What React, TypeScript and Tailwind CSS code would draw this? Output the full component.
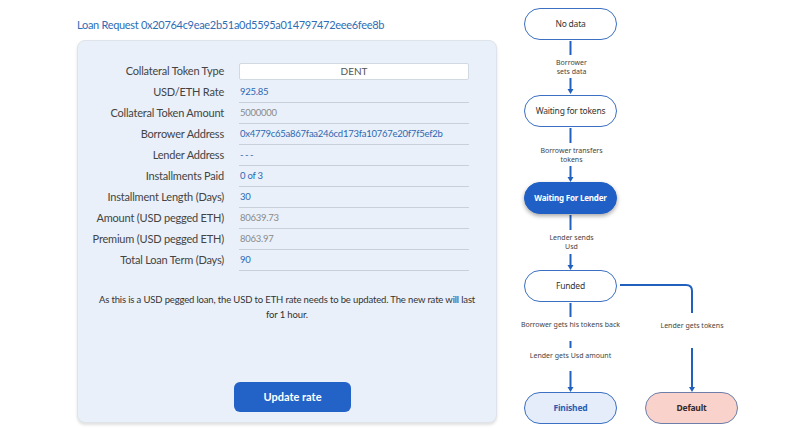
import React from 'react';

const rows: { label: string; value: string; tone: 'blue' | 'gray' }[] = [
  { label: 'USD/ETH Rate', value: '925.85', tone: 'blue' },
  { label: 'Collateral Token Amount', value: '5000000', tone: 'gray' },
  { label: 'Borrower Address', value: '0x4779c65a867faa246cd173fa10767e20f7f5ef2b', tone: 'blue' },
  { label: 'Lender Address', value: '---', tone: 'blue' },
  { label: 'Installments Paid', value: '0 of 3', tone: 'blue' },
  { label: 'Installment Length (Days)', value: '30', tone: 'blue' },
  { label: 'Amount (USD pegged ETH)', value: '80639.73', tone: 'gray' },
  { label: 'Premium (USD pegged ETH)', value: '8063.97', tone: 'gray' },
  { label: 'Total Loan Term (Days)', value: '90', tone: 'blue' },
];

function Node({
  label,
  top,
  left,
  variant = 'plain',
}: {
  label: string;
  top: number;
  left: number;
  variant?: 'plain' | 'active' | 'done' | 'fail';
}) {
  const styles = {
    plain: 'bg-white border-[#3b70c2] text-[#333] font-normal text-[8.5px]',
    active: 'bg-[#1f5fc6] border-[#1f5fc6] text-white font-bold text-[8px] shadow-[0_2px_4px_rgba(0,0,0,0.35)]',
    done: 'bg-[#e4edf9] border-[#3b70c2] text-[#2a5db4] font-bold text-[8.5px]',
    fail: 'bg-[#f9d2cc] border-[#6d7fa8] text-[#3a2a2a] font-bold text-[8.5px]',
  }[variant];
  return (
    <div
      className={`absolute flex h-[32px] w-[93px] items-center justify-center whitespace-nowrap rounded-full border tracking-[-0.2px] ${styles}`}
      style={{ top, left }}
    >
      {label}
    </div>
  );
}

function Label({ lines, top, center }: { lines: string[]; top: number; center: number }) {
  return (
    <div
      className="absolute w-[120px] text-center text-[7px] leading-[9px] text-[#444]"
      style={{ top, left: center - 60 }}
    >
      {lines.map((l) => (
        <div key={l}>{l}</div>
      ))}
    </div>
  );
}

function Flow() {
  const c = 60.5;
  const d = 182;
  const blue = '#2160bd';
  const arrow = (x: number, y1: number, y2: number) => (
    <g key={`${x}-${y1}`}>
      <line x1={x} y1={y1} x2={x} y2={y2 - 4} stroke={blue} strokeWidth={2} />
      <path d={`M${x - 3} ${y2 - 5} L${x + 3} ${y2 - 5} L${x} ${y2} Z`} fill={blue} />
    </g>
  );
  const seg = (x: number, y1: number, y2: number) => (
    <line key={`s-${x}-${y1}`} x1={x} y1={y1} x2={x} y2={y2} stroke={blue} strokeWidth={2} />
  );
  return (
    <div className="relative ml-[13px] h-[435px] w-[250px] font-['Noto_Sans',sans-serif]">
      <svg className="absolute left-0 top-0" width="250" height="435" viewBox="0 0 250 435">
        {seg(c, 41, 55)}
        {arrow(c, 78, 94)}
        {seg(c, 128, 143)}
        {arrow(c, 166, 182)}
        {seg(c, 215, 230)}
        {arrow(c, 254, 270)}
        {seg(c, 303, 317)}
        {seg(c, 341, 348)}
        {arrow(c, 371, 392)}
        <path
          d={`M110 285 H${d - 6} Q${d} 285 ${d} 291 V313`}
          fill="none"
          stroke={blue}
          strokeWidth={2}
        />
        {arrow(d, 348, 392)}
      </svg>

      <Node label="No data" top={8} left={14} />
      <Label lines={['Borrower', 'sets data']} top={58} center={c + 1} />
      <Node label="Waiting for tokens" top={95} left={14} />
      <Label lines={['Borrower transfers', 'tokens']} top={146} center={c + 1} />
      <Node label="Waiting For Lender" top={182} left={14} variant="active" />
      <Label lines={['Lender sends', 'Usd']} top={233} center={c + 1} />
      <Node label="Funded" top={270} left={14} />
      <Label lines={['Borrower gets his tokens back']} top={320} center={c} />
      <Label lines={['Lender gets Usd amount']} top={351} center={c} />
      <Label lines={['Lender gets tokens']} top={321} center={d} />
      <Node label="Finished" top={392} left={14} variant="done" />
      <Node label="Default" top={392} left={135} variant="fail" />
    </div>
  );
}

export default function App() {
  return (
    <div className="flex h-[435px] w-[808px] bg-white pl-[77px] font-['Lato',sans-serif]">
      <div className="w-[420px] pt-[17px]">
        <h1 className="text-[11px] leading-[16px] tracking-[-0.3px] text-[#2f6db5]">
          Loan Request 0x20764c9eae2b51a0d5595a014797472eee6fee8b
        </h1>
        <div className="mt-[7px] flex h-[383px] flex-col rounded-[8px] border border-[#dfe4ea] bg-[#e9f0f9] pt-[20px] shadow-[0_2px_3px_rgba(0,0,0,0.12)]">
          <div className="grid grid-cols-[146px_1fr] gap-x-[15px] pr-[27px]">
            <div className="flex h-[21px] items-center justify-end text-[11px] tracking-[-0.2px] text-[#444]">
              Collateral Token Type
            </div>
            <div className="flex h-[21px] items-center">
              <div className="flex h-[17px] w-[230px] items-center justify-center rounded-[2px] border border-[#d3d9e0] bg-white text-[10px] text-[#555]">
                DENT
              </div>
            </div>
            {rows.map((r) => (
              <React.Fragment key={r.label}>
                <div className="flex h-[21px] items-center justify-end text-[11px] tracking-[-0.2px] text-[#444]">
                  {r.label}
                </div>
                <div
                  className={`flex h-[21px] items-center border-b border-[#c9d0d9] pl-px text-[9.5px] tracking-[-0.25px] ${
                    r.tone === 'blue' ? 'text-[#2d68b1]' : 'text-[#8a8a8a]'
                  } ${r.value === '---' ? 'tracking-[1.5px]' : ''}`}
                >
                  {r.value}
                </div>
              </React.Fragment>
            ))}
          </div>
          <p className="mt-[21px] px-[16px] text-center text-[9.5px] leading-[15px] tracking-[-0.15px] text-[#333]">
            As this is a USD pegged loan, the USD to ETH rate needs to be updated. The new rate will last
            for 1 hour.
          </p>
          <div className="mt-auto flex justify-center pb-[10px] pl-[11px]">
            <button className="h-[30px] w-[117px] rounded-[6px] bg-[#2362c6] text-[11px] font-bold text-white">
              Update rate
            </button>
          </div>
        </div>
      </div>
      <Flow />
    </div>
  );
}
